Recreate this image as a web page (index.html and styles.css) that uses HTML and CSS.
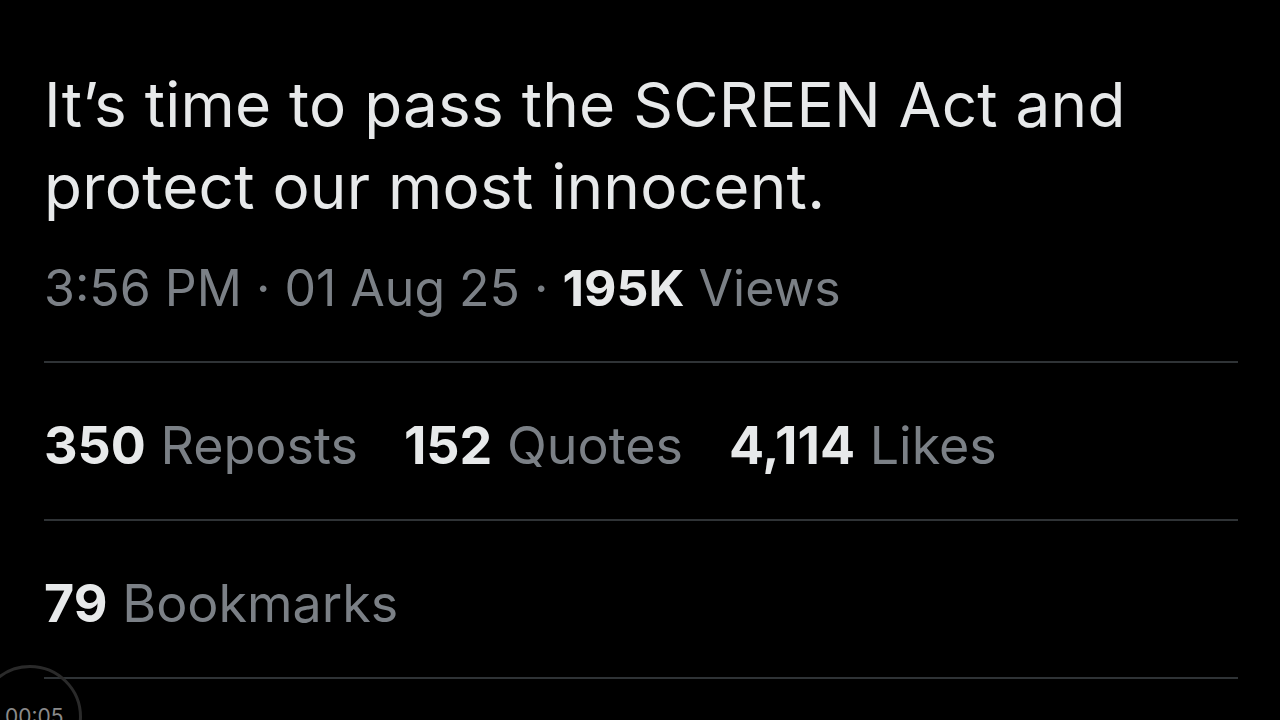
FILE: index.html
```html
<!DOCTYPE html>
<html lang="en">
<head>
<meta charset="utf-8">
<link rel="stylesheet" href="styles.css">
</head>
<body>
<main class="tweet">
  <p class="tweet-text">It’s time to pass the SCREEN Act and protect our most innocent.</p>
  <div class="meta">3:56 PM · 01 Aug 25 · <span class="num">195K</span> Views</div>
  <div class="row stats">
    <span class="stat"><span class="num">350</span> Reposts</span>
    <span class="stat"><span class="num">152</span> Quotes</span>
    <span class="stat"><span class="num">4,114</span> Likes</span>
  </div>
  <div class="row">
    <span class="stat"><span class="num">79</span> Bookmarks</span>
  </div>
  <div class="row end"></div>
</main>
<div class="timer"><span class="timer-text">00:05</span></div>
</body>
</html>
```
FILE: styles.css
```css
html, body {
  margin: 0;
  padding: 0;
  background: #000;
  height: 100%;
  overflow: hidden;
}
body {
  font-family: Inter, "Noto Sans", sans-serif;
  color: #e7e9ea;
}
.tweet {
  width: 1194px;
  margin-left: 44px;
}
.tweet-text {
  margin: 64px 0 0;
  font-size: 62px;
  line-height: 82px;
  font-weight: 400;
  letter-spacing: 0.25px;
  width: 1140px;
}
.meta {
  margin-top: 30px;
  margin-bottom: 43px;
  font-size: 50px;
  line-height: 60px;
  color: #7b8086;
}
.num {
  color: #e7e9ea;
  font-weight: 700;
}
.row {
  border-top: 2px solid #2f3336;
  height: 156px;
  display: flex;
  gap: 46px;
  font-size: 52px;
  line-height: 60px;
  color: #7b8086;
}
.stat {
  margin-top: 53px;
  white-space: nowrap;
}
.timer {
  position: absolute;
  left: -22px;
  top: 665px;
  width: 104px;
  height: 104px;
  border: 3px solid #2a2a2a;
  border-radius: 50%;
  box-sizing: border-box;
}
.timer-text {
  position: absolute;
  left: 24px;
  top: 36px;
  font-size: 21px;
  color: #8a8a8a;
  white-space: nowrap;
}
```
